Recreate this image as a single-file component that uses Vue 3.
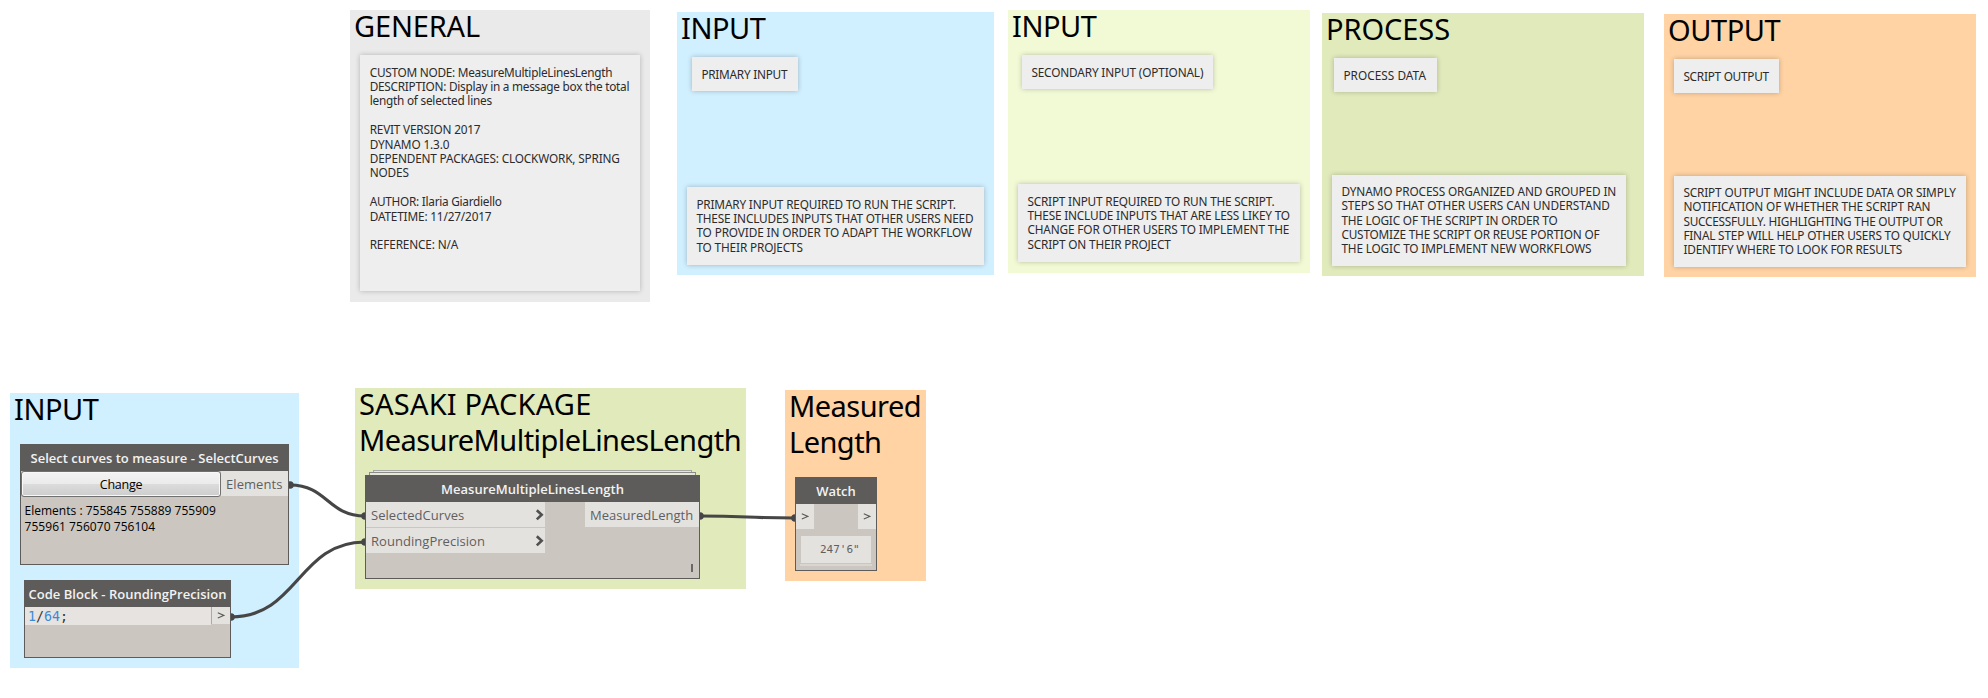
<script setup>
// Spreads the letters of one line so that it takes the given advance width.
const applyFit = (el, { value }) => {
  if (!value) return
  el.style.letterSpacing = '0px'
  const natural = el.getBoundingClientRect().width
  el.style.letterSpacing = `${(value - natural) / el.textContent.length}px`
}
const vFit = { mounted: applyFit }

const box = ([x, y, w, h]) => ({
  left: `${x}px`,
  top: `${y}px`,
  width: `${w}px`,
  height: `${h}px`,
})

const groups = [
  {
    tone: 'grey',
    rect: [350, 10, 300, 292],
    title: [['GENERAL', 126]],
    notes: [
      {
        rect: [360, 55.4, 279.6, 236],
        lines: [
          ['CUSTOM NODE: MeasureMultipleLinesLength', 242.5],
          ['DESCRIPTION: Display in a message box the total', 259.6],
          ['length of selected lines', 122.2],
          [],
          ['REVIT VERSION 2017', 110.7],
          ['DYNAMO 1.3.0', 79.7],
          ['DEPENDENT PACKAGES: CLOCKWORK, SPRING', 250],
          ['NODES', 39],
          [],
          ['AUTHOR: Ilaria Giardiello', 132],
          ['DATETIME: 11/27/2017', 121.7],
          [],
          ['REFERENCE: N/A', 88.4],
        ],
      },
    ],
  },
  {
    tone: 'blue',
    rect: [677, 12, 317, 263],
    title: [['INPUT', 84.5]],
    notes: [
      { rect: [691.7, 57.4, 106, 33.4], lines: [['PRIMARY INPUT', 85.9]] },
      {
        rect: [686.7, 187.4, 297, 78],
        lines: [
          ['PRIMARY INPUT REQUIRED TO RUN THE SCRIPT.', 259.5],
          ['THESE INCLUDES INPUTS THAT OTHER USERS NEED', 277],
          ['TO PROVIDE IN ORDER TO ADAPT THE WORKFLOW', 275.5],
          ['TO THEIR PROJECTS', 106.5],
        ],
      },
    ],
  },
  {
    tone: 'lime',
    rect: [1008, 10, 302, 263],
    title: [['INPUT', 84.5]],
    notes: [
      { rect: [1021.7, 55.4, 191.6, 33.4], lines: [['SECONDARY INPUT (OPTIONAL)', 171.9]] },
      {
        rect: [1017.7, 184.4, 282, 78],
        lines: [
          ['SCRIPT INPUT REQUIRED TO RUN THE SCRIPT.', 247],
          ['THESE INCLUDE INPUTS THAT ARE LESS LIKEY TO', 262.5],
          ['CHANGE FOR OTHER USERS TO IMPLEMENT THE', 261.8],
          ['SCRIPT ON THEIR PROJECT', 143.3],
        ],
      },
    ],
  },
  {
    tone: 'green',
    rect: [1322, 13, 322, 263],
    title: [['PROCESS', 124]],
    notes: [
      { rect: [1333.7, 58.4, 103, 33.4], lines: [['PROCESS DATA', 82.6]] },
      {
        rect: [1331.7, 174.6, 294, 91.6],
        lines: [
          ['DYNAMO PROCESS ORGANIZED AND GROUPED IN', 274.8],
          ['STEPS SO THAT OTHER USERS CAN UNDERSTAND', 268.5],
          ['THE LOGIC OF THE SCRIPT IN ORDER TO', 216.2],
          ['CUSTOMIZE THE SCRIPT OR REUSE PORTION OF', 258],
          ['THE LOGIC TO IMPLEMENT NEW WORKFLOWS', 250],
        ],
      },
    ],
  },
  {
    tone: 'orange',
    rect: [1664, 14, 312, 263],
    title: [['OUTPUT', 112.3]],
    notes: [
      { rect: [1673.7, 59.4, 105, 33.4], lines: [['SCRIPT OUTPUT', 85.5]] },
      {
        rect: [1673.7, 175.6, 292, 91.6],
        lines: [
          ['SCRIPT OUTPUT MIGHT INCLUDE DATA OR SIMPLY', 272.5],
          ['NOTIFICATION OF WHETHER THE SCRIPT RAN', 247],
          ['SUCCESSFULLY. HIGHLIGHTING THE OUTPUT OR', 259.3],
          ['FINAL STEP WILL HELP OTHER USERS TO QUICKLY', 267],
          ['IDENTIFY WHERE TO LOOK FOR RESULTS', 218.8],
        ],
      },
    ],
  },
  { tone: 'blue', rect: [10, 393, 289, 275], title: [['INPUT', 84.5]], notes: [] },
  {
    tone: 'green',
    rect: [355, 388, 391, 201],
    title: [['SASAKI PACKAGE', 232.5], ['MeasureMultipleLinesLength', 382]],
    notes: [],
  },
  {
    tone: 'orange',
    rect: [785, 390, 141, 191],
    title: [['Measured', 132], ['Length', 92.5]],
    notes: [],
  },
]

const notes = groups.flatMap((g) => g.notes)

const wires = [
  { from: [290, 485], to: [365, 516] },
  { from: [231, 617], to: [365, 542] },
  { from: [700, 516], to: [795, 518] },
]
const curve = ({ from: [x1, y1], to: [x2, y2] }) => {
  const mid = (x1 + x2) / 2
  return `M${x1} ${y1}C${mid} ${y1} ${mid} ${y2} ${x2} ${y2}`
}
</script>

<template>
  <main class="canvas">
    <section v-for="(g, i) in groups" :key="i" class="group" :class="g.tone" :style="box(g.rect)">
      <h2 class="group-title">
        <span v-for="[text, w] in g.title" :key="text" v-fit="w" class="line">{{ text }}</span>
      </h2>
    </section>

    <article v-for="(n, i) in notes" :key="i" class="note" :style="box(n.rect)">
      <p v-for="([text, w], j) in n.lines" :key="j" class="note-row">
        <span v-fit="w" class="line">{{ text }}</span>
      </p>
    </article>

    <svg class="wires" width="1988" height="698" viewBox="0 0 1988 698">
      <g v-for="(w, i) in wires" :key="i">
        <path :d="curve(w)" />
        <circle :cx="w.from[0]" :cy="w.from[1]" r="3.8" />
        <circle :cx="w.to[0]" :cy="w.to[1]" r="3.8" />
      </g>
    </svg>

    <section class="node select-node">
      <header class="node-head"><span v-fit="248" class="line">Select curves to measure - SelectCurves</span></header>
      <div class="row">
        <button class="change"><span v-fit="42.5" class="line">Change</span></button>
        <div class="port out"><span v-fit="56.5" class="line">Elements</span></div>
      </div>
      <div class="elements">
        <span v-fit="191.3" class="line">Elements : 755845 755889 755909</span>
        <span v-fit="130.7" class="line">755961 756070 756104</span>
      </div>
    </section>

    <section class="node code-node">
      <header class="node-head"><span v-fit="198" class="line">Code Block - RoundingPrecision</span></header>
      <div class="row">
        <div class="code"><b>1</b>/<b>64</b>;</div>
        <div class="code-port">
          <svg class="gt" width="8" height="7" viewBox="0 0 8 7"><path d="M.8 .8L6.8 3.4L.8 6" /></svg>
        </div>
      </div>
    </section>

    <div class="sheet back"></div>
    <div class="sheet front"></div>
    <section class="node measure-node">
      <header class="node-head"><span v-fit="183" class="line">MeasureMultipleLinesLength</span></header>
      <div class="row ports">
        <div class="inputs">
          <div class="port in">
            <span v-fit="93.3" class="line">SelectedCurves</span>
            <svg width="10" height="12" viewBox="0 0 10 12"><path class="chevron" d="M1.8 1.2L6.7 5.8L1.8 10.4" /></svg>
          </div>
          <div class="port in">
            <span v-fit="114" class="line">RoundingPrecision</span>
            <svg width="10" height="12" viewBox="0 0 10 12"><path class="chevron" d="M1.8 1.2L6.7 5.8L1.8 10.4" /></svg>
          </div>
        </div>
        <div class="port out"><span v-fit="103.3" class="line">MeasuredLength</span></div>
      </div>
      <div class="lacing"><i></i></div>
    </section>

    <section class="node watch-node">
      <header class="node-head"><span v-fit="39.5" class="line">Watch</span></header>
      <div class="row watch-ports">
        <div class="port mini">
          <svg class="gt" width="8" height="7" viewBox="0 0 8 7"><path d="M.8 .8L6.8 3.4L.8 6" /></svg>
        </div>
        <div class="port mini">
          <svg class="gt" width="8" height="7" viewBox="0 0 8 7"><path d="M.8 .8L6.8 3.4L.8 6" /></svg>
        </div>
      </div>
      <div class="value">247'6"</div>
      <div class="value-edge"></div>
    </section>
  </main>
</template>

<style>
body {
  margin: 0;
  background: #fff;
}
</style>

<style scoped>
.canvas {
  position: relative;
  width: 1988px;
  height: 698px;
  overflow: hidden;
  background: #fff;
  font-family: "Open Sans", "Noto Sans", sans-serif;
}
.line {
  display: inline-block;
  white-space: pre;
}
.group,
.note,
.node,
.sheet,
.wires {
  position: absolute;
  box-sizing: border-box;
}
.wires {
  left: 0;
  top: 0;
}
.wires path {
  fill: none;
  stroke: #464646;
  stroke-width: 3.2;
}
.wires circle {
  fill: #464646;
}
.grey { background: #eaeaea; }
.blue { background: #d0efff; }
.lime { background: #f2fad5; }
.green { background: #e1eabb; }
.orange { background: #ffd3a3; }
.group-title {
  display: flex;
  flex-direction: column;
  align-items: flex-start;
  margin: -2px 0 0 4px;
  font: 400 29px/36px "Noto Sans", sans-serif;
  color: #000;
}
.note {
  padding: 9.3px 0 0 9.7px;
  background: #eee;
  box-shadow: 0 0 5px rgba(0, 0, 0, 0.24);
  font: 11.8px/14.4px "Noto Sans", sans-serif;
  color: #2b2b2b;
}
.note-row {
  height: 14.4px;
  margin: 0;
}
.node {
  border: 1px solid #5e5c5a;
  background: #cbc6bf;
}
.node-head {
  display: flex;
  align-items: center;
  justify-content: center;
  height: 26px;
  background: #5e5c5a;
  color: #f2f2f2;
  font-size: 13px;
  font-weight: 600;
  line-height: 26px;
}
.row {
  display: flex;
}
.port {
  display: flex;
  align-items: center;
  box-sizing: border-box;
  height: 25px;
  background: #e4e2df;
  color: #5f5f5f;
  font-size: 13px;
  line-height: 25px;
}
.port .line {
  padding-top: 2px;
}
.select-node {
  left: 20px;
  top: 444px;
  width: 269px;
  height: 121px;
}
.change {
  box-sizing: border-box;
  width: 200px;
  height: 26px;
  padding: 0;
  border: 1px solid #707070;
  border-radius: 3px;
  background: linear-gradient(#f3f3f3 0%, #ebebeb 50%, #dcdcdc 50%, #cdcdcd 100%);
  box-shadow: inset 0 0 0 1px #f8f8f8;
  color: #000;
  font: 12.5px/24px "Open Sans", sans-serif;
}
.change .line {
  padding-top: 1px;
}
.select-node .out {
  flex: 1;
  padding-left: 5px;
}
.elements {
  display: flex;
  flex-direction: column;
  align-items: flex-start;
  padding: 6px 0 0 3.5px;
  color: #000;
  font-size: 12px;
  line-height: 16.3px;
}
.code-node {
  left: 24px;
  top: 580px;
  width: 207px;
  height: 78px;
}
.code {
  width: 186px;
  height: 18px;
  padding-left: 3px;
  box-sizing: border-box;
  background: #e7e3e0;
  color: #333;
  font: 13.3px/20px "DejaVu Sans Mono", monospace;
}
.code b {
  color: #3b8ad9;
  font-weight: 400;
}
.code-port {
  display: flex;
  flex: 1;
  align-items: center;
  justify-content: center;
  height: 17px;
  border-left: 1px solid #aaa;
  background: #e4e2df;
}
.gt path {
  fill: none;
  stroke: #5a5a5a;
  stroke-width: 1.1;
}
.sheet {
  height: 8px;
  border: 1px solid #8b8b88;
  background: #e5e8d8;
}
.back {
  left: 373px;
  top: 470px;
  width: 319px;
  border-color: #a5a5a2;
}
.front {
  left: 369px;
  top: 472px;
  width: 327px;
}
.measure-node {
  left: 365px;
  top: 475px;
  width: 335px;
  height: 104px;
}
.ports {
  justify-content: space-between;
}
.inputs {
  display: flex;
  flex-direction: column;
  gap: 1px;
  width: 179px;
  background: #c9c7c4;
}
.in {
  justify-content: space-between;
  padding: 0 0 0 5px;
}
.chevron {
  fill: none;
  stroke: #505050;
  stroke-width: 2.6;
}
.measure-node .out {
  width: 114px;
  padding-left: 5px;
}
.lacing {
  display: flex;
  justify-content: flex-end;
  padding: 11px 6px 0 0;
}
.lacing i {
  width: 2px;
  height: 8px;
  background: #6a6865;
}
.watch-node {
  left: 795px;
  top: 477px;
  width: 82px;
  height: 94px;
}
.watch-ports {
  justify-content: space-between;
}
.mini {
  justify-content: center;
  width: 18px;
}
.value {
  box-sizing: border-box;
  width: 70px;
  height: 27px;
  margin: 7px auto 0;
  padding-left: 19px;
  background: #e4e2df;
  color: #5f5f5f;
  font: 11px/27px "DejaVu Sans Mono", monospace;
}
.value-edge {
  width: 72px;
  height: 2px;
  margin: 1px auto 0;
  background: #d9d6d2;
}
</style>
